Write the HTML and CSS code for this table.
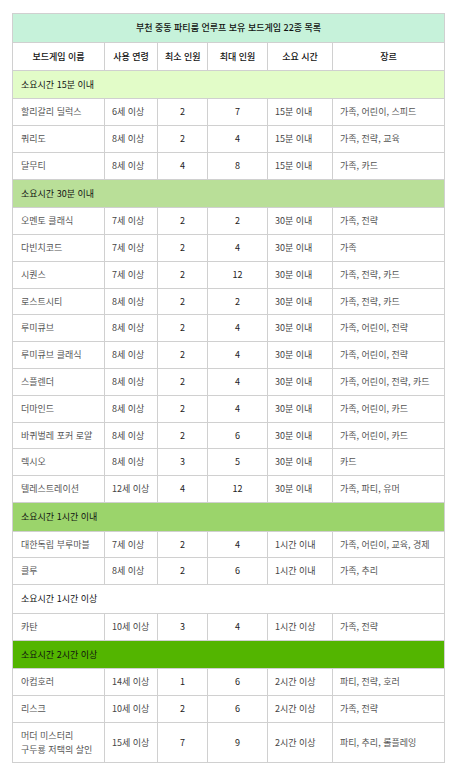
FILE: index.html
```html
<!DOCTYPE html>
<html lang="ko">
<head>
<meta charset="utf-8">
<title>부천 중동 파티룸 언루프 보유 보드게임 22종 목록</title>
<link rel="stylesheet" href="styles.css">
</head>
<body>
<div class="page">
<table class="games">
  <colgroup>
    <col class="c-name"><col class="c-age"><col class="c-min"><col class="c-max"><col class="c-time"><col class="c-genre">
  </colgroup>
  <thead>
    <tr><th colspan="6" class="title">부천 중동 파티룸 언루프 보유 보드게임 22종 목록</th></tr>
    <tr class="head">
      <th>보드게임 이름</th><th>사용 연령</th><th>최소 인원</th><th>최대 인원</th><th>소요 시간</th><th>장르</th>
    </tr>
  </thead>
  <tbody>
    <tr class="sec sec-15"><td colspan="6">소요시간 15분 이내</td></tr>
    <tr><td class="name">할리갈리 딜럭스</td><td>6세 이상</td><td class="num">2</td><td class="num">7</td><td>15분 이내</td><td class="genre">가족, 어린이, 스피드</td></tr>
    <tr><td class="name">쿼리도</td><td>8세 이상</td><td class="num">2</td><td class="num">4</td><td>15분 이내</td><td class="genre">가족, 전략, 교육</td></tr>
    <tr><td class="name">달무티</td><td>8세 이상</td><td class="num">4</td><td class="num">8</td><td>15분 이내</td><td class="genre">가족, 카드</td></tr>

    <tr class="sec sec-30"><td colspan="6">소요시간 30분 이내</td></tr>
    <tr><td class="name">오멘토 클래식</td><td>7세 이상</td><td class="num">2</td><td class="num">2</td><td>30분 이내</td><td class="genre">가족, 전략</td></tr>
    <tr><td class="name">다빈치코드</td><td>7세 이상</td><td class="num">2</td><td class="num">4</td><td>30분 이내</td><td class="genre">가족</td></tr>
    <tr><td class="name">시퀀스</td><td>7세 이상</td><td class="num">2</td><td class="num">12</td><td>30분 이내</td><td class="genre">가족, 전략, 카드</td></tr>
    <tr><td class="name">로스트시티</td><td>8세 이상</td><td class="num">2</td><td class="num">2</td><td>30분 이내</td><td class="genre">가족, 전략, 카드</td></tr>
    <tr><td class="name">루미큐브</td><td>8세 이상</td><td class="num">2</td><td class="num">4</td><td>30분 이내</td><td class="genre">가족, 어린이, 전략</td></tr>
    <tr><td class="name">루미큐브 클래식</td><td>8세 이상</td><td class="num">2</td><td class="num">4</td><td>30분 이내</td><td class="genre">가족, 어린이, 전략</td></tr>
    <tr><td class="name">스플렌더</td><td>8세 이상</td><td class="num">2</td><td class="num">4</td><td>30분 이내</td><td class="genre">가족, 어린이, 전략, 카드</td></tr>
    <tr><td class="name">더마인드</td><td>8세 이상</td><td class="num">2</td><td class="num">4</td><td>30분 이내</td><td class="genre">가족, 어린이, 카드</td></tr>
    <tr><td class="name">바퀴벌레 포커 로얄</td><td>8세 이상</td><td class="num">2</td><td class="num">6</td><td>30분 이내</td><td class="genre">가족, 어린이, 카드</td></tr>
    <tr><td class="name">렉시오</td><td>8세 이상</td><td class="num">3</td><td class="num">5</td><td>30분 이내</td><td class="genre">카드</td></tr>
    <tr><td class="name">텔레스트레이션</td><td>12세 이상</td><td class="num">4</td><td class="num">12</td><td>30분 이내</td><td class="genre">가족, 파티, 유머</td></tr>

    <tr class="sec sec-60"><td colspan="6">소요시간 1시간 이내</td></tr>
    <tr><td class="name">대한독립 부루마블</td><td>7세 이상</td><td class="num">2</td><td class="num">4</td><td>1시간 이내</td><td class="genre">가족, 어린이, 교육, 경제</td></tr>
    <tr><td class="name">클루</td><td>8세 이상</td><td class="num">2</td><td class="num">6</td><td>1시간 이내</td><td class="genre">가족, 추리</td></tr>

    <tr class="sec sec-60p"><td colspan="6">소요시간 1시간 이상</td></tr>
    <tr><td class="name">카탄</td><td>10세 이상</td><td class="num">3</td><td class="num">4</td><td>1시간 이상</td><td class="genre">가족, 전략</td></tr>

    <tr class="sec sec-120"><td colspan="6">소요시간 2시간 이상</td></tr>
    <tr><td class="name">아컴호러</td><td>14세 이상</td><td class="num">1</td><td class="num">6</td><td>2시간 이상</td><td class="genre">파티, 전략, 호러</td></tr>
    <tr><td class="name">리스크</td><td>10세 이상</td><td class="num">2</td><td class="num">6</td><td>2시간 이상</td><td class="genre">가족, 전략</td></tr>
    <tr><td class="name">머더 미스터리<br>구두룡 저택의 살인</td><td>15세 이상</td><td class="num">7</td><td class="num">9</td><td>2시간 이상</td><td class="genre">파티, 추리, 롤플레잉</td></tr>
  </tbody>
</table>
</div>
</body>
</html>
```

FILE: styles.css
```css
html, body {
  margin: 0;
  padding: 0;
  background: #ffffff;
}

.page {
  padding: 13px 0 0 12px;
  font-family: "Noto Sans CJK KR", "Noto Sans", "Liberation Sans", sans-serif;
  font-size: 9px;
  line-height: 13.8px;
  color: #444444;
}

.games {
  border-collapse: collapse;
  table-layout: fixed;
  width: 433px;
}

.c-name { width: 92px; }
.c-age { width: 53px; }
.c-min { width: 50px; }
.c-max { width: 60px; }
.c-time { width: 65px; }
.c-genre { width: 112px; }

.games th,
.games td {
  border: 1px solid #d0d0d0;
  padding: 6px 7px;
  text-align: left;
  vertical-align: middle;
  white-space: nowrap;
  overflow: hidden;
}

.games th {
  color: #111111;
  font-weight: 500;
  text-align: center;
}

.games .title {
  background: #c6f2da;
  padding: 7px 7px;
}

.games .head th {
  padding: 7px 7px 6px;
}

.games td.name {
  padding-left: 8px;
  color: #555555;
}

.games td.num {
  text-align: center;
  color: #222222;
}

.games td.genre {
  color: #555555;
}

.games .sec td {
  padding: 7px 8px;
  line-height: 13.6px;
  color: #111111;
}

.sec-15 td { background: #e2fcc8; }
.sec-30 td { background: #b9df98; }
.sec-60 td { background: #9bd46b; }
.sec-60p td { background: #ffffff; }
.sec-120 td { background: #53b500; }
```
